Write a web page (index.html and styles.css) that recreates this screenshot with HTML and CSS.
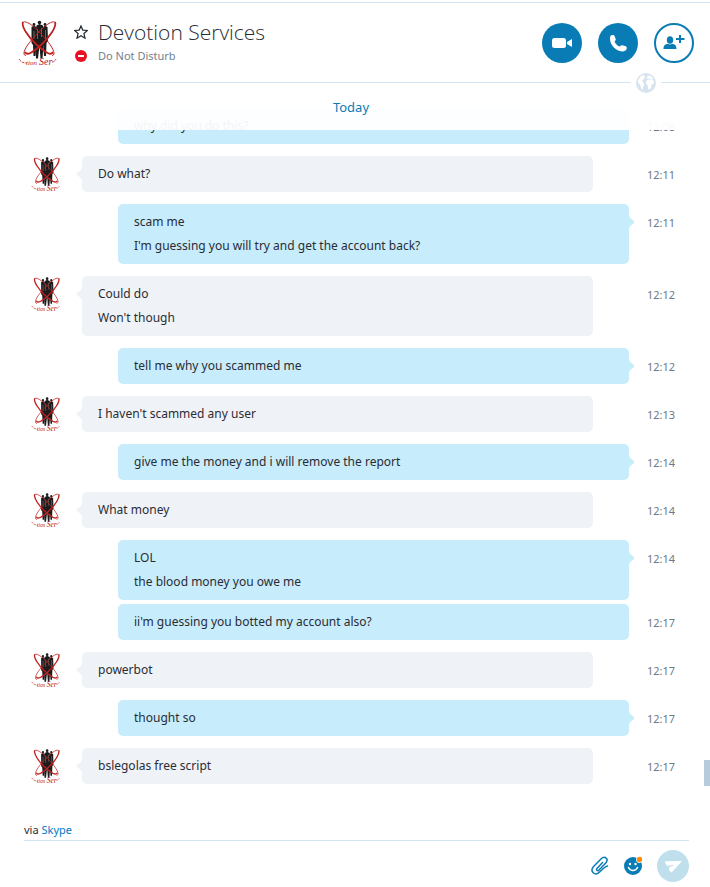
FILE: index.html
```html
<!DOCTYPE html>
<html lang="en">
<head>
    <meta charset="UTF-8">
    <meta name="viewport" content="width=device-width, initial-scale=1.0">
    <link rel="stylesheet" href="styles.css">
    <title>Devotion Services</title>
</head>
<body>
    <!-- Contact picture, used in the header and next to messages -->
    <svg class="symbols" aria-hidden="true">
        <symbol id="avatar" viewBox="0 0 40 48">
            <g fill="#1c1c1c">
                <circle cx="21.500" cy="3.500" r="1.800"/>
                <circle cx="16" cy="5.500" r="1.400"/>
                <circle cx="27" cy="5.500" r="1.400"/>
                <path d="M18.500 6.500l3-1.500 3.500 1.500 1 13-1.500 20h-2l-1-13-1.500 13h-2L17 20z"/>
                <path d="M13.500 8l2.500-1.500L18.500 8v15l-1 14h-2l-.5-11-1.500-2z"/>
                <path d="M25 8l2-1.500L29.500 8l.5 14-1.500 2-.5 13h-2l-1-13z"/>
            </g>
            <path d="M19.500 10v10M23.500 9v9M16 12v8M27.500 11v9" stroke="#999" stroke-width=".6" fill="none"/>
            <g fill="none" stroke="#c0201f">
                <path d="M5 3.500c3-3 13 5 23 17 8 9 10 16 6 16" stroke-width="1"/>
                <path d="M37 3.500c-3-3-13 5-23 17-8 9-10 16-6 16" stroke-width="1"/>
                <path d="M5 3c-2 4 5 15 14 23 9 8 14 11 16 7" stroke-width="1.800"/>
                <path d="M37 3c2 4-5 15-14 23-9 8-14 11-16 7" stroke-width="1.800"/>
            </g>
            <path d="M1 40c2 3 4 4 8 4M34 43c2 0 3-1 4-3" stroke="#b8191d" stroke-width=".8" stroke-dasharray="3 1" fill="none"/>
            <text x="8" y="46" class="avatar-text">tion</text>
            <text x="21" y="46" class="avatar-text avatar-text-big">Ser</text>
        </symbol>
    </svg>

    <header class="header">
        <svg class="header-avatar" role="img" aria-label="Devotion Services"><use href="#avatar"/></svg>
        <div class="contact">
            <button class="star" aria-label="Add to favourites">
                <svg viewBox="1 1 14 14"><path d="M8 1.900l1.800 4.200 4.600.4-3.500 3 1.100 4.700L8 11.700l-4 2.500 1.100-4.700-3.500-3 4.600-.4z" fill="none" stroke="#222a33" stroke-width="1.200"/></svg>
            </button>
            <h1>Devotion Services</h1>
            <svg class="status-icon" viewBox="0 0 12 12"><circle cx="6" cy="6" r="6" fill="#e81123"/><rect x="3" y="5" width="6" height="2" fill="#fff"/></svg>
            <p>Do Not Disturb</p>
        </div>
        <div class="actions">
            <button class="action" aria-label="Video call">
                <svg viewBox="0 0 20 20" fill="#fff"><rect x="0" y="5" width="14" height="10" rx="2.500"/><path d="M15 9l5-3v8l-5-3z"/></svg>
            </button>
            <button class="action" aria-label="Call">
                <svg viewBox="0 0 20 20" fill="#fff"><path d="M2.500 2.800C4 1.500 6 1.700 6.500 3L7.700 6c.4 1.200-.8 1.800-1.200 2.600 1 2.400 2.800 4 5 5 .8-.5 1.500-1.600 2.700-1.300l3.500 1c1.600.5 1.200 3-.2 4.200C10.500 21.500-.5 11.500 2.500 2.800z"/></svg>
            </button>
            <button class="action action-light" aria-label="Add people">
                <svg viewBox="0 0 22 20" fill="#0a7cb5"><ellipse cx="7" cy="7" rx="3.200" ry="3.800"/><path d="M.5 16c0-4 2-4.800 4.500-5.200 1.200 1 2.800 1 4 0 2.500.4 4.500 1.200 4.500 5.200z"/><path d="M16 2h2v3h3.500v2H18v3h-2V7h-3V5h3z"/></svg>
            </button>
        </div>
        <div class="globe">
            <svg viewBox="0 0 20 20"><circle cx="10" cy="10" r="10" fill="#d7e4ef"/><path d="M2 7l3-4 3-1 1 2-1 2-2 1 1 2 1 2-1 4-1 2-1-2-1-4-2-1zM12 2.500l3 .5 2.500 3-2.500.5-1.500-1-2 .5-.5-2zM10 8l3-1.500 4 .5 1.500 3-2.500 1-1 4-2.500 2-1-5-1.500-1.500z" fill="#fff"/></svg>
        </div>
    </header>

    <main class="chat">
        <div class="day">Today</div>
        <div class="row sent">
            <div class="bubble"><p>why did you do this?</p></div>
            <time>12:08</time>
        </div>
        <div class="row">
            <svg class="avatar"><use href="#avatar"/></svg>
            <div class="bubble tail"><p>Do what?</p></div>
            <time>12:11</time>
        </div>
        <div class="row sent">
            <div class="bubble tail"><p>scam me</p><p>I'm guessing you will try and get the account back?</p></div>
            <time>12:11</time>
        </div>
        <div class="row">
            <svg class="avatar"><use href="#avatar"/></svg>
            <div class="bubble tail"><p>Could do</p><p>Won't though</p></div>
            <time>12:12</time>
        </div>
        <div class="row sent">
            <div class="bubble tail"><p>tell me why you scammed me</p></div>
            <time>12:12</time>
        </div>
        <div class="row">
            <svg class="avatar"><use href="#avatar"/></svg>
            <div class="bubble tail"><p>I haven't scammed any user</p></div>
            <time>12:13</time>
        </div>
        <div class="row sent">
            <div class="bubble tail"><p>give me the money and i will remove the report</p></div>
            <time>12:14</time>
        </div>
        <div class="row">
            <svg class="avatar"><use href="#avatar"/></svg>
            <div class="bubble tail"><p>What money</p></div>
            <time>12:14</time>
        </div>
        <div class="row sent">
            <div class="bubble tail"><p>LOL</p><p>the blood money you owe me</p></div>
            <time>12:14</time>
        </div>
        <div class="row sent same">
            <div class="bubble"><p>ii'm guessing you botted my account also?</p></div>
            <time>12:17</time>
        </div>
        <div class="row">
            <svg class="avatar"><use href="#avatar"/></svg>
            <div class="bubble tail"><p>powerbot</p></div>
            <time>12:17</time>
        </div>
        <div class="row sent">
            <div class="bubble tail"><p>thought so</p></div>
            <time>12:17</time>
        </div>
        <div class="row">
            <svg class="avatar"><use href="#avatar"/></svg>
            <div class="bubble tail"><p>bslegolas free script</p></div>
            <time>12:17</time>
        </div>
        <div class="scroll-thumb"></div>
    </main>

    <footer class="composer">
        <div class="via">via <a href="#">Skype</a></div>
        <form class="compose-row">
            <input type="text" class="message-input" aria-label="Message">
            <button type="button" class="tool" aria-label="Attach a file">
                <svg viewBox="0 0 18 20"><path d="M11.500 6.500L6 12.500c-1.300 1.600.6 3 2 1.600l6.800-7.200c3.400-4-1-7.500-4.600-4.200L2.600 10.600c-4.200 4.700 1.200 9.900 5.800 5.700l3.600-3.600c1.200-1 2.500-2.200 4.500-2.700" fill="none" stroke="#0a7cb5" stroke-width="1.500" stroke-linecap="round"/></svg>
            </button>
            <button type="button" class="tool" aria-label="Emoticons">
                <svg viewBox="0 0 18 20"><circle cx="9" cy="10" r="9" fill="#0a7cb5"/><circle cx="6" cy="8" r="1.200" fill="#fff"/><circle cx="11.500" cy="8" r="1.200" fill="#fff"/><path d="M4.500 11.500c2 4 7 4 9 0" fill="none" stroke="#fff" stroke-width="1.500" stroke-linecap="round"/><circle cx="15.500" cy="3.500" r="3.400" fill="#fff"/><circle cx="15.500" cy="3.500" r="2.700" fill="#ff8c00"/></svg>
            </button>
            <button type="submit" class="send" aria-label="Send">
                <svg viewBox="0 0 32 32"><path d="M8 11.200L25 11 14.500 22.500c-2-1-2.800-3-2.500-5l6.500-3-8 1.500c-1.500-1-2.300-2.800-2.500-4.800z" fill="#fff"/></svg>
            </button>
        </form>
    </footer>
</body>
</html>
```

FILE: styles.css
```css
* {
    box-sizing: border-box;
}
body {
    margin: 0;
    min-height: 100vh;
    display: flex;
    flex-direction: column;
    background-color: #fff;
    color: #2b2c33;
    font-family: "Noto Sans", "Open Sans", sans-serif;
    font-size: 12px;
}
h1, p {
    margin: 0;
}
button {
    padding: 0;
    border: none;
    background: none;
    cursor: pointer;
}
svg {
    display: block;
}
.symbols {
    display: none;
}
.avatar-text {
    font: italic 7px "Liberation Serif", serif;
    fill: #b8191d;
}
.avatar-text-big {
    font-size: 10px;
}

/* Header */
.header {
    position: relative;
    display: flex;
    align-items: center;
    height: 81px;
    margin-top: 2px;
    padding: 0 16px 0 18px;
    border-top: 1px solid #d3e5f1;
    border-bottom: 1px solid #d3e5f1;
}
.header-avatar {
    width: 40px;
    height: 48px;
}
.contact {
    flex: 1;
    display: grid;
    grid-template-columns: 14px 1fr;
    grid-template-rows: 26px 22px;
    column-gap: 10px;
    align-items: center;
    justify-items: start;
    margin-left: 16px;
}
.contact h1 {
    font-family: "Open Sans", sans-serif;
    font-size: 21px;
    font-weight: 300;
    line-height: 26px;
}
.contact p {
    color: #727f8f;
    font-size: 11px;
}
.star svg {
    width: 14px;
    height: 14px;
}
.status-icon {
    width: 12px;
    height: 12px;
    justify-self: center;
}
.actions {
    display: flex;
    gap: 16px;
}
.action {
    display: flex;
    align-items: center;
    justify-content: center;
    width: 40px;
    height: 40px;
    border-radius: 50%;
    background-color: #0a7cb5;
}
.action svg {
    width: 20px;
    height: 20px;
}
.action-light {
    background-color: #fff;
    border: 2px solid #0a7cb5;
}
.action-light svg {
    width: 22px;
}
.globe {
    position: absolute;
    right: 49px;
    bottom: -11px;
    z-index: 2;
    padding: 0 5px;
    background-color: #fff;
}
.globe svg {
    width: 20px;
    height: 20px;
}

/* Messages */
.chat {
    position: relative;
    flex: 1;
}
.day {
    position: sticky;
    top: 0;
    z-index: 1;
    height: 47px;
    margin: 0 16px -22px 8px;
    background-color: rgba(255, 255, 255, 0.95);
    color: #0a7cb5;
    font-size: 13px;
    line-height: 48px;
    text-align: center;
}
.row {
    display: grid;
    grid-template-columns: 82px 1fr 81px;
    margin-bottom: 12px;
}
.avatar {
    width: 30px;
    height: 36px;
    margin-left: 31px;
}
.bubble {
    position: relative;
    grid-column: 2;
    margin-right: 36px;
    padding: 6px 16px;
    border-radius: 5px;
    background-color: #eff3f8;
    line-height: 24px;
}
.sent .bubble {
    margin-left: 36px;
    margin-right: 0;
    background-color: #c7ecfc;
}
.tail::before {
    content: "";
    position: absolute;
    top: 11px;
    left: -5px;
    width: 5px;
    height: 14px;
    background-color: inherit;
    clip-path: polygon(100% 0, 80% 20%, 0 42%, 0 58%, 80% 80%, 100% 100%);
}
.sent .tail::before {
    left: auto;
    right: -5px;
    clip-path: polygon(0 0, 20% 20%, 100% 42%, 100% 58%, 20% 80%, 0 100%);
}
.same {
    margin-top: -8px;
}
.row time {
    grid-column: 3;
    padding: 7px 0 0 18px;
    color: #6b7889;
    font-size: 11px;
    line-height: 24px;
}
.scroll-thumb {
    position: absolute;
    right: 0;
    bottom: 10px;
    width: 6px;
    height: 26px;
    background-color: #b6cbdc;
}

/* Composer */
.composer {
    padding: 26px 21px 5px 24px;
}
.via {
    padding-bottom: 2px;
    border-bottom: 1px solid #d3e5f1;
    font-size: 11px;
    line-height: 16px;
}
.via a {
    color: #0078ca;
    text-decoration: none;
}
.compose-row {
    display: flex;
    align-items: center;
    gap: 15px;
    margin-top: 9px;
}
.message-input {
    flex: 1;
    min-width: 0;
    height: 32px;
    border: none;
    outline: none;
    background: none;
    font: inherit;
}
.tool svg {
    width: 18px;
    height: 20px;
}
.send {
    width: 32px;
    height: 32px;
    border-radius: 50%;
    background-color: #c0dfed;
}
```
